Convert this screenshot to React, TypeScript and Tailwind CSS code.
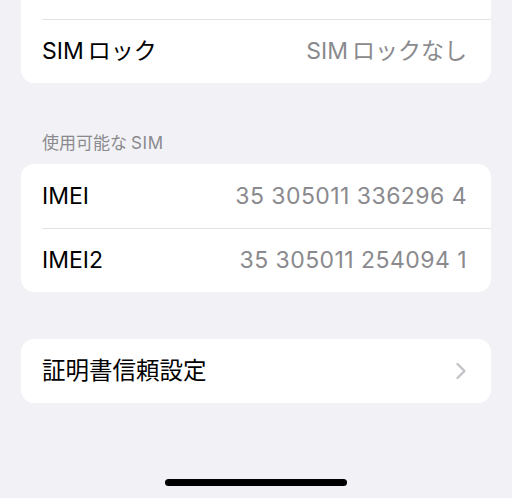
const font = "font-['Inter','Noto_Sans_CJK_JP',sans-serif]";

// Latin word followed by Japanese, with the small gap iOS leaves between scripts
const Mixed = ({ latin, jp }: { latin: string; jp: string }) => (
  <span>
    <span className="mr-[4px]">{latin}</span>
    {jp}
  </span>
);

const Row = ({ label, value, divider }: { label: React.ReactNode; value?: React.ReactNode; divider?: boolean }) => (
  <div className="pl-[21px]">
    <div className={`flex h-[64px] items-center justify-between pr-[24px] ${divider ? "border-t border-[#e2e2e7]" : ""}`}>
      <span className="text-[23px] text-black">{label}</span>
      {value && <span className="text-[23px] text-[#8a8a8e]">{value}</span>}
    </div>
  </div>
);

export default function App() {
  return (
    <div className={`h-[498px] w-[512px] overflow-hidden bg-[#f1f1f6] ${font}`}>
      {/* top card, cut off by the window */}
      <div className="mx-[21px] -mt-[45px] rounded-[13px] bg-white">
        <div className="h-[64px]" />
        <Row label={<Mixed latin="SIM" jp="ロック" />} value={<Mixed latin="SIM" jp="ロックなし" />} divider />
      </div>

      <div className="px-[42px] pb-[11px] pt-[50px] text-[17px] leading-[20px] text-[#8a8a8e]">
        使用可能な<span className="ml-[4px] tracking-[0.6px]">SIM</span>
      </div>

      <div className="mx-[21px] rounded-[13px] bg-white">
        <Row label="IMEI" value={<span className="tracking-[0.45px]">35 305011 336296 4</span>} />
        <Row label="IMEI2" value={<span className="tracking-[0.45px]">35 305011 254094 1</span>} divider />
      </div>

      <div className="mx-[21px] mt-[47px] rounded-[13px] bg-white">
        <div className="flex h-[64px] items-center justify-between pl-[21px] pr-[24px]">
          <span className="text-[23.5px] text-black">証明書信頼設定</span>
          <svg width="12" height="18" viewBox="0 0 12 18" fill="none">
            <path d="M2.5 2 L9.5 9 L2.5 16" stroke="#c3c3c8" strokeWidth="2.4" strokeLinecap="round" strokeLinejoin="round" />
          </svg>
        </div>
      </div>

      <div className="mt-[76px] flex justify-center">
        <div className="h-[7px] w-[182px] rounded-full bg-black" />
      </div>
    </div>
  );
}
